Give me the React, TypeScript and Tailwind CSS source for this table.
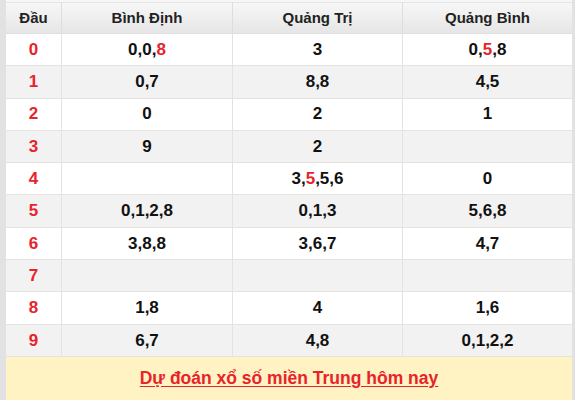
import React from "react";

type Part = { t: string; red?: boolean };
const rows: { d: string; c: Part[][] }[] = [
  { d: "0", c: [[{ t: "0,0," }, { t: "8", red: true }], [{ t: "3" }], [{ t: "0," }, { t: "5", red: true }, { t: ",8" }]] },
  { d: "1", c: [[{ t: "0,7" }], [{ t: "8,8" }], [{ t: "4,5" }]] },
  { d: "2", c: [[{ t: "0" }], [{ t: "2" }], [{ t: "1" }]] },
  { d: "3", c: [[{ t: "9" }], [{ t: "2" }], []] },
  { d: "4", c: [[], [{ t: "3," }, { t: "5", red: true }, { t: ",5,6" }], [{ t: "0" }]] },
  { d: "5", c: [[{ t: "0,1,2,8" }], [{ t: "0,1,3" }], [{ t: "5,6,8" }]] },
  { d: "6", c: [[{ t: "3,8,8" }], [{ t: "3,6,7" }], [{ t: "4,7" }]] },
  { d: "7", c: [[], [], []] },
  { d: "8", c: [[{ t: "1,8" }], [{ t: "4" }], [{ t: "1,6" }]] },
  { d: "9", c: [[{ t: "6,7" }], [{ t: "4,8" }], [{ t: "0,1,2,2" }]] },
];

const cols = "grid grid-cols-[56px_171px_170px_1fr]";

export default function App() {
  return (
    <div
      className="w-[575px] h-[400px] overflow-hidden bg-[#e2e2e2] flex"
      style={{ fontFamily: '"Liberation Sans", Arial, sans-serif' }}
    >
      <div className="ml-[6px] mr-[3px] flex-1 flex flex-col bg-white">
        <div className="h-[3px] bg-[#f7f7f7] border-b border-[#e4e4e4]" />
        <div className={`${cols} h-[31px] bg-gradient-to-b from-[#f7f7f7] to-[#e6e6e6] border-b border-[#dedede] text-[15px] font-bold text-[#222]`}>
          <div className="flex items-center justify-center border-r border-[#e0ddd8]">Đầu</div>
          <div className="flex items-center justify-center border-r border-[#e0ddd8]">Bình Định</div>
          <div className="flex items-center justify-center border-r border-[#e0ddd8]">Quảng Trị</div>
          <div className="flex items-center justify-center">Quảng Bình</div>
        </div>
        {rows.map((r, i) => (
          <div
            key={r.d}
            className={`${cols} h-[32.3px] border-b border-[#e6e3de] text-[17px] font-bold text-[#111] ${i % 2 === 1 ? "bg-[#f2f2f2]" : "bg-white"}`}
          >
            <div className="flex items-center justify-center border-r border-[#e6e3de] text-[#e8232b]">{r.d}</div>
            {r.c.map((cell, j) => (
              <div
                key={j}
                className={`flex items-center justify-center ${j < 2 ? "border-r border-[#e6e3de]" : ""}`}
              >
                {cell.map((p, k) => (
                  <span key={k} className={p.red ? "text-[#e8232b]" : ""}>
                    {p.t}
                  </span>
                ))}
              </div>
            ))}
          </div>
        ))}
        <div className="flex-1 bg-[#fff2c3] flex items-center justify-center">
          <a className="text-[17.5px] font-bold text-[#e8232b] underline underline-offset-2">
            Dự đoán xổ số miền Trung hôm nay
          </a>
        </div>
      </div>
    </div>
  );
}
